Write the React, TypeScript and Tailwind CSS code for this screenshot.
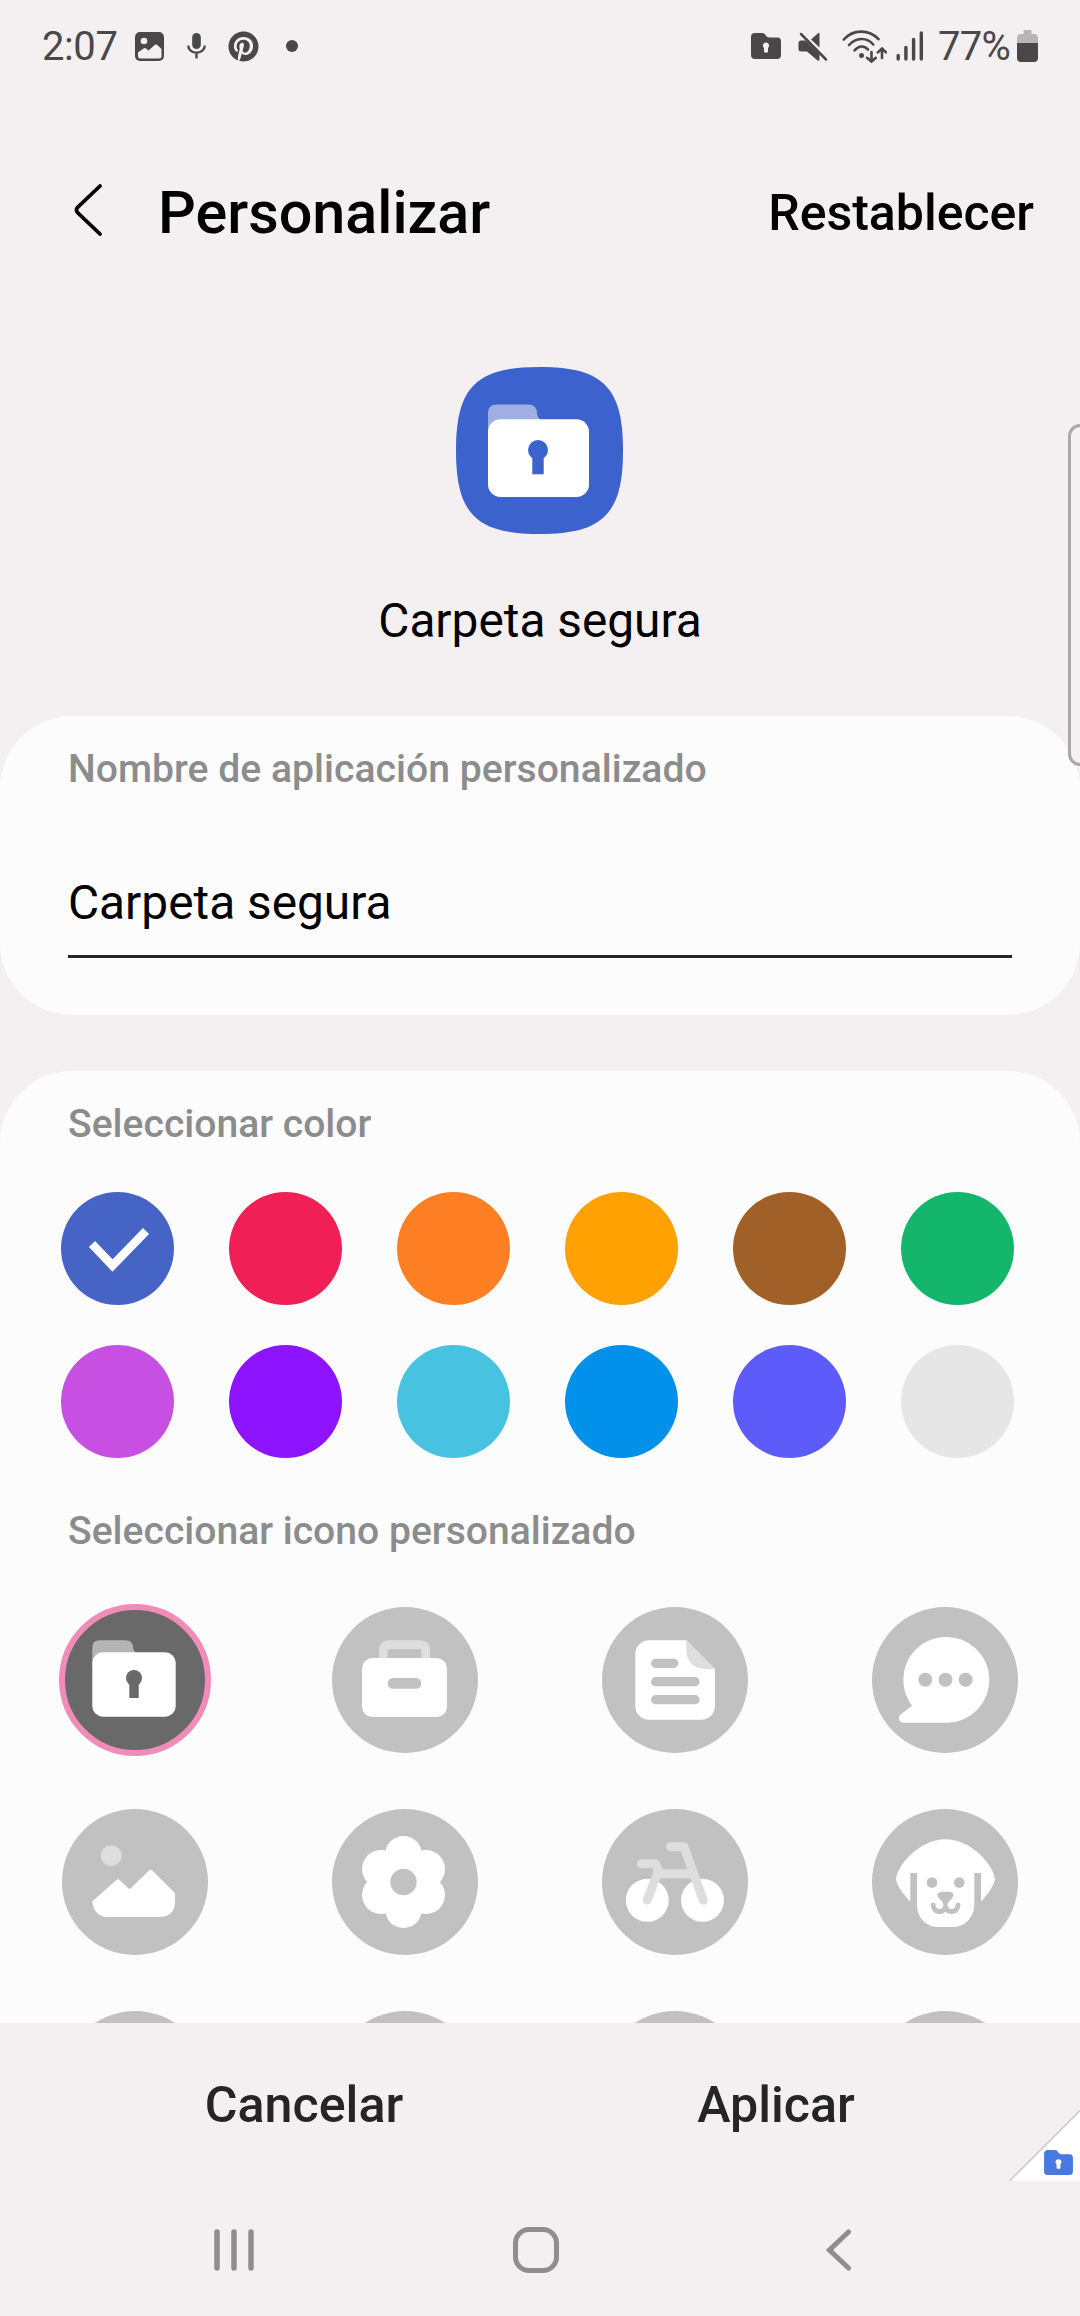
import { ReactNode } from "react";
import { FaPinterest } from "react-icons/fa";

const colors = [
  "bg-[#4664c6]",
  "bg-[#f01f55]",
  "bg-[#ff7f24]",
  "bg-[#ffa003]",
  "bg-[#a06027]",
  "bg-[#14b66c]",
  "bg-[#c750e2]",
  "bg-[#8e14ff]",
  "bg-[#47c2e0]",
  "bg-[#0191ea]",
  "bg-[#5e5bfb]",
  "bg-[#e6e6e6]",
];

function StatusBar() {
  return (
    <div className="flex h-[92px] shrink-0 items-center pl-[42px] text-[40px] text-[#4a4748]">
      <span className="w-[93px] leading-[93px] tracking-[-0.4px]">2:07</span>
      <svg className="h-[29px] w-[29px]" viewBox="0 0 29 29">
        <rect width="29" height="29" rx="5" fill="currentColor" />
        <circle cx="9" cy="9" r="3.3" fill="#f4f0f1" />
        <path
          d="M3 20.5L9 16.2Q10 15.7 11 16.5L13.5 18.5L20 12.8Q21 12 22 12.8L26.5 17V24Q26.5 26.5 24 26.5H5.5Q3 26.5 3 24Z"
          fill="#f4f0f1"
        />
      </svg>
      <svg className="ml-[23px] h-[26px] w-[19px]" viewBox="0 0 19 26">
        <rect x="5.2" y="0" width="8.6" height="16" rx="4.3" fill="currentColor" />
        <path
          d="M1.2 12.5C1.5 22 17.5 22 17.8 12.5M9.5 19.5V25.5"
          fill="none"
          stroke="currentColor"
          strokeWidth="2.4"
        />
      </svg>
      <FaPinterest className="ml-[22px] h-[31px] w-[31px]" />
      <span className="ml-[27px] h-3 w-3 rounded-full bg-[#4a4748]" />

      <div className="flex flex-1 items-center justify-end pr-[42px]">
        <FolderGlyph className="h-[26px] w-[30px]" holeClass="fill-[#f4f0f1]" />
        <svg className="ml-[17px] h-[30px] w-[30px]" viewBox="0 0 30 30">
          <path
            d="M13 8.6L20 2.2Q21.5 1 21.5 2.5V16.5ZM7.5 9.5H3Q0.5 9.5 0.5 12V18Q0.5 20.5 3 20.5H9L19.6 29.5Q21.5 30.5 21.5 28.5V23Z"
            fill="currentColor"
          />
          <path d="M3 3L28 28.5" stroke="currentColor" strokeWidth="2.5" strokeLinecap="round" />
        </svg>
        <svg className="ml-[14px] h-[33px] w-[45px]" viewBox="0 0 45 33">
          <g fill="none" stroke="currentColor" strokeWidth="2.6" strokeLinecap="round">
            <path d="M1.8 9.5C11 -1 27 -1 36.5 9.2" />
            <path d="M7 15C14 7 25 7 31.3 14.5" />
            <path d="M12.5 20.3C17 15.3 22 15.3 26 19.5" />
            <path d="M29.5 22V31M25 27.8L29.5 31.6L33.8 27.8M40 28V19M35.8 22.4L40 18.6L44 22.4" />
          </g>
          <circle cx="19.5" cy="25.5" r="2.5" fill="currentColor" />
        </svg>
        <svg className="ml-[9px] h-[30px] w-[28px]" viewBox="0 0 28 30">
          <path
            d="M2.2 24.5V28M9.9 16.5V28M17.6 8.5V28M25.3 2V28"
            stroke="currentColor"
            strokeWidth="3.4"
            strokeLinecap="round"
          />
        </svg>
        <span className="ml-[14px] w-[79px] leading-[93px] tracking-[-0.7px] whitespace-nowrap">77%</span>
        <svg className="h-[32px] w-[21px]" viewBox="0 0 21 32">
          <path
            d="M6.5 1Q6.5 0 7.5 0H13.5Q14.5 0 14.5 1V4H17Q21 4 21 8V13H0V8Q0 4 4 4H6.5Z"
            fill="#b9b5b7"
          />
          <path d="M0 13H21V28Q21 32 17 32H4Q0 32 0 28Z" fill="currentColor" />
        </svg>
      </div>
    </div>
  );
}

function FolderGlyph({ className, holeClass }: { className: string; holeClass: string }) {
  return (
    <svg className={className} viewBox="0 0 30 26">
      <path
        d="M0 4Q0 0 4 0H11.5Q13.5 0 14.5 2Q16 4.5 18 4.5H26.5Q30 4.5 30 8.5V22Q30 26 26 26H4Q0 26 0 22Z"
        fill="currentColor"
      />
      <path
        d="M15 9.5A3.1 3.1 0 0 0 13 15V19Q15 20.5 17 19V15A3.1 3.1 0 0 0 15 9.5Z"
        className={holeClass}
      />
    </svg>
  );
}

function AppIcon() {
  return (
    <svg className="mr-[2px] h-[167px] w-[167px]" viewBox="0 0 167 167">
      <path
        d="M0 83.5C0 50 5.5 30.5 18 18S50 0 83.5 0S136.5 5.5 149 18S167 50 167 83.5S161.5 136.5 149 149S117 167 83.5 167S30.5 161.5 18 149S0 117 0 83.5Z"
        fill="#3c62cd"
      />
      <path d="M32 66V46Q32 37.5 40.5 37.5H72Q81 37.5 81 46.5Q81 50 85 53V66Z" fill="#9fafe4" />
      <rect x="32" y="52.3" width="101" height="77.7" rx="12.5" fill="#fff" />
      <circle cx="82" cy="83" r="10" fill="#3c62cd" />
      <path d="M76.3 86H87.7V107.3H76.3Z" fill="#3c62cd" />
    </svg>
  );
}

function IconButton({ children, selected }: { children?: ReactNode; selected?: boolean }) {
  return (
    <button className="h-[146px] w-[146px]">
      <svg className="h-[146px] w-[146px] overflow-visible" viewBox="0 0 146 146">
        {selected ? (
          <circle cx="73" cy="73" r="73" fill="#696969" stroke="#f08cb8" strokeWidth="6" />
        ) : (
          <circle cx="73" cy="73" r="73" fill="#c1c1c1" />
        )}
        {children}
      </svg>
    </button>
  );
}

function IconGrid() {
  return (
    <div className="mt-[46px] grid grid-cols-4 gap-x-[124px] gap-y-14 px-[62px]">
      {/* Folder */}
      <IconButton selected>
        <path d="M30.3 58V40.5Q30.3 33.3 37.5 33.3H63.5Q71 33.3 71 41Q71.5 44 75 46.5V58Z" fill="#b4b4b4" />
        <rect x="30.3" y="45.3" width="83.4" height="64.4" rx="10.5" fill="#fff" />
        <circle cx="72" cy="71" r="8" fill="#696969" />
        <path d="M67.3 73H76.7V91H67.3Z" fill="#696969" />
      </IconButton>

      {/* Briefcase */}
      <IconButton>
        <path
          d="M51.3 56V43.7Q51.3 37.7 57.3 37.7H87.7Q93.7 37.7 93.7 43.7V56"
          fill="none"
          stroke="#dedede"
          strokeWidth="8.7"
        />
        <rect x="30" y="51" width="85" height="59" rx="10.5" fill="#fff" />
        <rect x="55.7" y="71" width="33.6" height="10.7" rx="5.3" fill="#c1c1c1" />
      </IconButton>

      {/* Document */}
      <IconButton>
        <path
          d="M47 33.3H84.3L113 62V99A13.7 13.7 0 0 1 99.3 112.7H47A13.7 13.7 0 0 1 33.3 99V47A13.7 13.7 0 0 1 47 33.3Z"
          fill="#fff"
        />
        <path d="M84.3 33.3L113 62H103C91 62 84.3 53 84.3 43Z" fill="#dedede" />
        <path
          d="M53.7 56.3H71.7M53.7 74.7H93M53.7 92.7H93"
          stroke="#c1c1c1"
          strokeWidth="9.3"
          strokeLinecap="round"
        />
      </IconButton>

      {/* Chat bubble */}
      <IconButton>
        <path
          d="M73.5 30A42.6 42.8 0 0 1 76 115.7H32C27 115.7 25 110.5 29 107.3L40 98.7A42.6 42.8 0 0 1 73.5 30Z"
          fill="#fff"
        />
        <circle cx="53.3" cy="72.8" r="7" fill="#c1c1c1" />
        <circle cx="73.5" cy="72.8" r="7" fill="#c1c1c1" />
        <circle cx="93.7" cy="72.8" r="7" fill="#c1c1c1" />
      </IconButton>

      {/* Picture */}
      <IconButton>
        <circle cx="49.3" cy="46.7" r="10.5" fill="#dedede" />
        <path
          d="M30.3 92.3L54.5 71Q56 69.7 57.5 71L66 79Q67.5 80.7 69 79L87 61.5Q88.7 60 90.4 61.5L113 84.3V94Q112 107 99 108H44.3Q31.5 106.5 30.3 92.3Z"
          fill="#fff"
        />
      </IconButton>

      {/* Flower */}
      <IconButton>
        <g fill="#fff">
          <circle cx="71.5" cy="45.3" r="18.3" />
          <circle cx="71.5" cy="100.7" r="18.3" />
          <circle cx="49" cy="60" r="19" />
          <circle cx="94" cy="60" r="19" />
          <circle cx="49" cy="86" r="19" />
          <circle cx="94" cy="86" r="19" />
          <circle cx="71.5" cy="73" r="28" />
        </g>
        <circle cx="71.5" cy="73" r="13.2" fill="#c1c1c1" />
      </IconButton>

      {/* Bicycle */}
      <IconButton>
        <circle cx="45.3" cy="91.3" r="21.5" fill="#fff" />
        <circle cx="100.5" cy="91.3" r="21.5" fill="#fff" />
        <path
          d="M68.5 37.7H82L101.3 91.3M39.5 54.7H53.5L56.5 61.5L45.3 91M57 64.8H91"
          fill="none"
          stroke="#dedede"
          strokeWidth="9"
          strokeLinecap="round"
          strokeLinejoin="round"
        />
      </IconButton>

      {/* Dog */}
      <IconButton>
        <path
          d="M24 70.3C25 57 47 30.3 73.5 30.3S122 57 123 70.3C122 77 115 86 109 92.7V64H102.3V96C102 108 93 118 81.3 118H65.7C54 118 45 108 45 96V64H38.3V92.7C32 86 25 77 24 70.3Z"
          fill="#fff"
        />
        <g fill="#c1c1c1">
          <circle cx="60" cy="73.5" r="5.3" />
          <circle cx="87.3" cy="73.5" r="5.3" />
          <path d="M69.5 82.7H77.5Q83 83.5 81 88L77 92.5Q75.5 94 75.5 97.5H71.5Q71.5 94 70 92.5L66 88Q64 83.5 69.5 82.7Z" />
        </g>
        <path
          d="M61.2 96.2C62 104.5 72 104.5 73.5 97.5C75 104.5 85 104.5 86 96.2"
          fill="none"
          stroke="#c1c1c1"
          strokeWidth="5"
          strokeLinecap="round"
        />
      </IconButton>

      <IconButton />
      <IconButton />
      <IconButton />
      <IconButton />
    </div>
  );
}

export default function App() {
  return (
    <div className="relative flex h-[2316px] w-[1080px] flex-col overflow-hidden bg-[#f4f0f1] font-['Roboto',sans-serif] text-black">
      <StatusBar />

      {/* Header */}
      <header className="flex h-[242px] shrink-0 items-center pr-[46px] pl-[73px]">
        <svg className="-mt-[6px] h-[52px] w-[30px]" viewBox="0 0 30 52">
          <path
            d="M27 2L4.5 23.5Q2.5 26 4.5 28.5L27 50"
            fill="none"
            stroke="currentColor"
            strokeWidth="3.8"
            strokeLinecap="round"
          />
        </svg>
        <h1 className="ml-[55px] text-[59.3px] leading-[90px] font-medium">Personalizar</h1>
        <button className="ml-auto text-[50px] font-medium">Restablecer</button>
      </header>

      {/* Preview */}
      <div className="mt-[33px] flex shrink-0 flex-col items-center">
        <AppIcon />
        <p className="mt-[57px] text-[47.8px] leading-[60px]">Carpeta segura</p>
      </div>

      {/* Custom name */}
      <section className="mt-[65px] h-[299px] shrink-0 rounded-[72px] bg-[#fcfcfc] px-[68px] pt-[23px]">
        <h2 className="text-[39.15px] leading-[60px] font-medium text-[#8c8c8c]">
          Nombre de aplicación personalizado
        </h2>
        <p className="mt-[74px] border-b-[3px] border-[#252525] pb-[22px] text-[47.8px] leading-[60px]">
          Carpeta segura
        </p>
      </section>

      {/* Color and icon pickers */}
      <section className="mt-14 h-[952px] shrink-0 overflow-hidden rounded-t-[72px] bg-[#fcfcfc] pt-[23px]">
        <h2 className="px-[68px] text-[39.1px] leading-[60px] font-medium text-[#8c8c8c]">
          Seleccionar color
        </h2>
        <div className="mt-[38px] grid grid-cols-6 gap-x-[55px] gap-y-10 pr-[66px] pl-[61px]">
          {colors.map((color, i) => (
            <button
              key={color}
              className={`flex h-[113px] w-[113px] items-center justify-center rounded-full ${color}`}
            >
              {i === 0 && (
                <svg className="h-[113px] w-[113px]" viewBox="0 0 113 113">
                  <path d="M31 52L51.5 73.5L85 39" fill="none" stroke="#fff" strokeWidth="8.5" />
                </svg>
              )}
            </button>
          ))}
        </div>
        <h2 className="mt-[43px] px-[68px] text-[39.1px] leading-[60px] font-medium text-[#8c8c8c]">
          Seleccionar icono personalizado
        </h2>
        <IconGrid />
      </section>

      {/* Actions */}
      <footer className="flex h-[163px] shrink-0 items-center px-[69px] pt-px text-[50.2px] font-medium text-[#252525]">
        <button className="flex-1">Cancelar</button>
        <button className="flex-1 pl-[2px]">Aplicar</button>
      </footer>

      {/* System navigation */}
      <nav className="flex h-[128px] shrink-0 items-center pl-[214px] text-[#8f8d8e]">
        <svg className="h-[42px] w-[40px]" viewBox="0 0 40 42">
          <path
            d="M3 3V39M20 3V39M37 3V39"
            stroke="currentColor"
            strokeWidth="5.5"
            strokeLinecap="round"
          />
        </svg>
        <span className="ml-[259px] h-[46px] w-[46px] rounded-[16px] border-[5.5px] border-[#8f8d8e]" />
        <svg className="ml-[267px] h-[42px] w-[26px]" viewBox="0 0 26 42">
          <path
            d="M22.5 3L3.5 21L22.5 39"
            fill="none"
            stroke="currentColor"
            strokeWidth="5"
            strokeLinecap="round"
          />
        </svg>
      </nav>

      {/* Edge panel handle */}
      <div className="absolute top-[424px] -right-[12px] h-[342px] w-[24px] rounded-[12px] border-[3px] border-[#aaa8a9] bg-[#f4f2f3]" />

      {/* Secure folder corner badge */}
      <div className="absolute top-[2108px] right-0 h-[73px] w-[73px] text-[#467ae2]">
        <svg className="h-[73px] w-[73px]" viewBox="0 0 73 73">
          <path d="M3 73L73 3V73Z" fill="#fff" />
          <path d="M2.5 73L73 2.5" stroke="#cfcccd" strokeWidth="1.6" />
        </svg>
        <div className="absolute top-[42px] left-[36px]">
          <FolderGlyph className="h-[25px] w-[31px]" holeClass="fill-white" />
        </div>
      </div>
    </div>
  );
}
